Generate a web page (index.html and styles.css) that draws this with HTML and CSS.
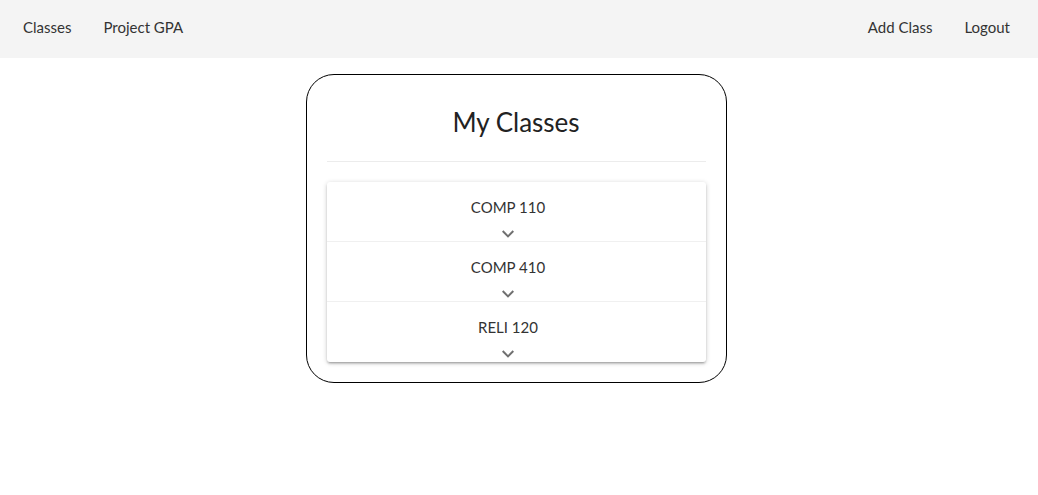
FILE: index.html
```html
<!DOCTYPE html>
<html lang="en">
<head>
<meta charset="utf-8">
<title>My Classes</title>
<link rel="stylesheet" href="styles.css">
</head>
<body>
<nav class="navbar">
  <ul class="nav-left">
    <li><a href="#">Classes</a></li>
    <li><a href="#">Project GPA</a></li>
  </ul>
  <ul class="nav-right">
    <li><a href="#">Add Class</a></li>
    <li><a href="#">Logout</a></li>
  </ul>
</nav>
<main class="main">
  <section class="card">
    <h1 class="card-title">My Classes</h1>
    <hr class="divider">
    <ul class="collapsible">
      <li class="collapsible-item">
        <span class="class-name">COMP 110</span>
        <svg class="chevron" viewBox="6 8.5 12 7.5" width="12" height="8"><path d="M16.59 8.59L12 13.17 7.41 8.59 6 10l6 6 6-6z"/></svg>
      </li>
      <li class="collapsible-item">
        <span class="class-name">COMP 410</span>
        <svg class="chevron" viewBox="6 8.5 12 7.5" width="12" height="8"><path d="M16.59 8.59L12 13.17 7.41 8.59 6 10l6 6 6-6z"/></svg>
      </li>
      <li class="collapsible-item">
        <span class="class-name">RELI 120</span>
        <svg class="chevron" viewBox="6 8.5 12 7.5" width="12" height="8"><path d="M16.59 8.59L12 13.17 7.41 8.59 6 10l6 6 6-6z"/></svg>
      </li>
    </ul>
  </section>
</main>
</body>
</html>
```

FILE: styles.css
```css
* { box-sizing: border-box; }

body {
  margin: 0;
  font-family: Lato, "Open Sans", "Liberation Sans", sans-serif;
  color: #333;
  background: #fff;
}

.navbar {
  height: 58px;
  background: #f4f4f4;
  display: flex;
  justify-content: space-between;
  align-items: center;
  padding: 0 12px 0 7px;
}

.nav-left, .nav-right {
  list-style: none;
  margin: 0;
  padding: 0;
  display: flex;
}

.navbar a {
  display: block;
  padding: 0 16px;
  line-height: 50px;
  margin-bottom: 4px;
  font-size: 15px;
  color: #333;
  text-decoration: none;
}

.main {
  display: flex;
  justify-content: center;
  padding: 16px 6px 0 0;
}

.card {
  width: 421px;
  border: 1px solid #000;
  border-radius: 28px;
  padding: 20px;
}

.card-title {
  margin: 12px 0 24px;
  font-size: 26px;
  line-height: 30px;
  font-weight: 400;
  text-align: center;
  color: #222;
}

.divider {
  margin: 0 0 20px;
  border: 0;
  border-top: 1px solid #ececec;
}

.collapsible {
  list-style: none;
  margin: 0;
  padding: 0;
  border-radius: 3px;
  box-shadow: 0 2px 2px 0 rgba(0,0,0,.14), 0 3px 1px -2px rgba(0,0,0,.12), 0 1px 5px 0 rgba(0,0,0,.2);
}

.collapsible-item {
  height: 60px;
  display: flex;
  flex-direction: column;
  align-items: center;
  padding: 15px 16px 0 0;
  border-bottom: 1px solid #f0f0f0;
}

.collapsible-item:last-child { border-bottom: 0; }

.class-name {
  font-size: 15px;
  line-height: 20px;
  color: #333;
}

.chevron {
  margin-top: 13px;
  fill: #707070;
}
```
